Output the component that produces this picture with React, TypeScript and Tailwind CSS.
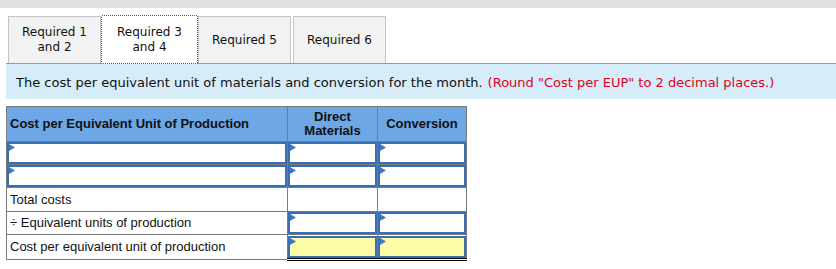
import React from "react";

const tabs = [
  { label: ["Required 1", "and 2"], active: false, w: "w-[93px]" },
  { label: ["Required 3", "and 4"], active: true, w: "w-[97px]" },
  { label: ["Required 5"], active: false, w: "w-[93px]" },
  { label: ["Required 6"], active: false, w: "w-[93px]" },
];

// little blue flag in the corner of an answer cell
function Flag() {
  return (
    <svg className="absolute left-0 top-0" width="6" height="7" viewBox="0 0 6 7">
      <polygon points="0,0 6,3.5 0,7" fill="#3b78c9" />
    </svg>
  );
}

// dotted focus ring round the selected tab
function FocusRing() {
  return (
    <svg className="absolute inset-0 pointer-events-none" width="97" height="49" shapeRendering="crispEdges">
      <rect
        x="0.5"
        y="0.5"
        width="96"
        height="48"
        fill="none"
        stroke="#2a67c4"
        strokeWidth="1"
        strokeDasharray="1 1"
      />
    </svg>
  );
}

function InputCell({ yellow = false }: { yellow?: boolean }) {
  return (
    <td
      className={
        "border border-[#7a7a7a] p-0 " + (yellow ? "border-b-[3px] border-b-black border-double" : "")
      }
    >
      <div
        className={
          "relative h-[22px] border-2 border-[#3a6db3] " + (yellow ? "bg-[#fcfca6]" : "bg-white")
        }
      >
        <Flag />
      </div>
    </td>
  );
}

export default function App() {
  return (
    <div className="w-[836px] h-[269px] bg-white overflow-hidden">
      <div className="h-2 bg-[#e0e0e0]" />

      {/* tab strip */}
      <div className="ml-[6px] mt-[7px] flex items-end border-b border-[#9a9a9a] font-['DejaVu_Sans',sans-serif] text-[12px] leading-[15px] text-[#111]">
        <div className="w-[2px]" />
        {tabs.map((t, i) => (
          <div
            key={i}
            className={
              t.w +
              " relative flex flex-col items-center justify-center text-center " +
              (t.active
                ? "h-[49px] -mb-px bg-white"
                : "h-[47px] bg-[#f2f2f2] border border-b-0 border-[#c4c4c4] " + (i === 3 ? "ml-[2px]" : ""))
            }
          >
            {t.active && <FocusRing />}
            {t.label.map((l) => (
              <span key={l}>{l}</span>
            ))}
          </div>
        ))}
      </div>

      {/* instructions */}
      <div className="ml-[6px] h-[35px] bg-[#d6ecf8] pl-[10px] pt-[2px] flex items-center font-['DejaVu_Sans',sans-serif] text-[13px] text-[#111]">
        <span>The cost per equivalent unit of materials and conversion for the month.</span>
        <span className="ml-[5px] text-[#e0001b]">(Round "Cost per EUP" to 2 decimal places.)</span>
      </div>

      <table className="ml-[6px] mt-[7px] border-collapse font-['Liberation_Sans',Arial,sans-serif] text-[13px] text-[#111]">
        <thead>
          <tr className="bg-[#6ea7e6] h-[35px]">
            <th className="w-[281px] border border-[#7a7a7a] pl-[3px] text-left font-bold">
              Cost per Equivalent Unit of Production
            </th>
            <th className="w-[90px] border border-[#7a7a7a] font-bold leading-[14px]">
              Direct
              <br />
              Materials
            </th>
            <th className="w-[89px] border border-[#7a7a7a] font-bold">Conversion</th>
          </tr>
        </thead>
        <tbody>
          <tr>
            <InputCell />
            <InputCell />
            <InputCell />
          </tr>
          <tr>
            <InputCell />
            <InputCell />
            <InputCell />
          </tr>
          <tr className="h-[24px]">
            <td className="border border-[#7a7a7a] pl-[3px] pt-[1px]">Total costs</td>
            <td className="border border-[#7a7a7a]" />
            <td className="border border-[#7a7a7a]" />
          </tr>
          <tr>
            <td className="border border-[#7a7a7a] pl-[3px]">÷ Equivalent units of production</td>
            <InputCell />
            <InputCell />
          </tr>
          <tr>
            <td className="border border-[#7a7a7a] pl-[3px] h-[25px]">Cost per equivalent unit of production</td>
            <InputCell yellow />
            <InputCell yellow />
          </tr>
        </tbody>
      </table>
    </div>
  );
}
